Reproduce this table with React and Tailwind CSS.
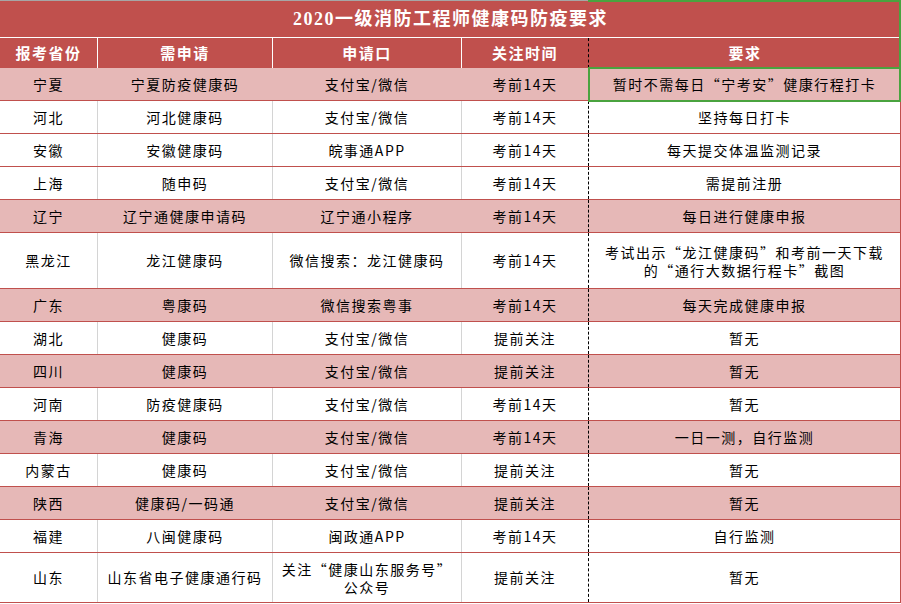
import React from 'react';

const rows = [
  { p: '宁夏', a: '宁夏防疫健康码', b: '支付宝/微信', t: '考前14天', r: '暂时不需每日“宁考安”健康行程打卡', pink: true },
  { p: '河北', a: '河北健康码', b: '支付宝/微信', t: '考前14天', r: '坚持每日打卡' },
  { p: '安徽', a: '安徽健康码', b: '皖事通APP', t: '考前14天', r: '每天提交体温监测记录' },
  { p: '上海', a: '随申码', b: '支付宝/微信', t: '考前14天', r: '需提前注册' },
  { p: '辽宁', a: '辽宁通健康申请码', b: '辽宁通小程序', t: '考前14天', r: '每日进行健康申报', pink: true },
  { p: '黑龙江', a: '龙江健康码', b: '微信搜索：龙江健康码', t: '考前14天', r: ['考试出示“龙江健康码”和考前一天下载', '的“通行大数据行程卡”截图'], h: 'h-[56px]' },
  { p: '广东', a: '粤康码', b: '微信搜索粤事', t: '考前14天', r: '每天完成健康申报', pink: true },
  { p: '湖北', a: '健康码', b: '支付宝/微信', t: '提前关注', r: '暂无' },
  { p: '四川', a: '健康码', b: '支付宝/微信', t: '提前关注', r: '暂无', pink: true },
  { p: '河南', a: '防疫健康码', b: '支付宝/微信', t: '考前14天', r: '暂无' },
  { p: '青海', a: '健康码', b: '支付宝/微信', t: '考前14天', r: '一日一测，自行监测', pink: true },
  { p: '内蒙古', a: '健康码', b: '支付宝/微信', t: '提前关注', r: '暂无' },
  { p: '陕西', a: '健康码/一码通', b: '支付宝/微信', t: '提前关注', r: '暂无', pink: true },
  { p: '福建', a: '八闽健康码', b: '闽政通APP', t: '考前14天', r: '自行监测' },
  { p: '山东', a: '山东省电子健康通行码', b: ['关注“健康山东服务号”', '公众号'], t: '提前关注', r: '暂无', h: 'h-[50px]' },
];

const Lines = ({ v }) => Array.isArray(v)
  ? <span className="block leading-[18px]">{v[0]}<br />{v[1]}</span>
  : v;

export default function App() {
  return (
    <div className="relative w-[901px] h-[604px] bg-white overflow-hidden font-['Noto_Sans_CJK_SC',sans-serif] text-[14px] tracking-[1.5px] text-black">
      {/* title */}
      <div className="h-[37px] bg-[#c0504d] border-t border-[#a6a6a6] flex items-center justify-center text-white font-bold text-[18px] tracking-[1.5px] font-['Liberation_Serif','Noto_Sans_CJK_SC',serif]">
        2020一级消防工程师健康码防疫要求
      </div>

      {/* header */}
      <div className="h-[31px] flex bg-[#c0504d] border-t border-white text-white font-bold text-[15px]">
        <div className="w-[98px] border-r border-white flex items-center justify-center">报考省份</div>
        <div className="w-[175px] border-r border-white flex items-center justify-center">需申请</div>
        <div className="w-[189px] border-r border-white flex items-center justify-center">申请口</div>
        <div className="w-[127px] border-r border-dashed border-black flex items-center justify-center">关注时间</div>
        <div className="w-[312px] flex items-center justify-center">要求</div>
      </div>

      {rows.map((row) => {
        const vline = row.pink ? 'border-[#e6b8b7]' : 'border-[#d4d4d4]';
        return (
          <div key={row.p} className={`flex border-b border-[#c0504d] ${row.h || 'h-[33px]'} ${row.pink ? 'bg-[#e6b8b7]' : 'bg-white'}`}>
            <div className={`w-[98px] border-r ${vline} flex items-center justify-center text-center`}>{row.p}</div>
            <div className={`w-[175px] border-r ${vline} flex items-center justify-center text-center`}>{row.a}</div>
            <div className={`w-[189px] border-r ${vline} flex items-center justify-center text-center`}><Lines v={row.b} /></div>
            <div className="w-[127px] border-r border-dashed border-black flex items-center justify-center text-center">{row.t}</div>
            <div className="w-[312px] border-r border-[#c0504d] flex items-center justify-center text-center"><Lines v={row.r} /></div>
          </div>
        );
      })}

      {/* selection marks */}
      <div className="absolute left-[588px] top-0 w-[313px] h-[2px] bg-[#4aa33f]" />
      <div className="absolute left-[899px] top-0 w-[2px] h-[68px] bg-[#4aa33f]" />
      <div className="absolute left-[588px] top-[67px] w-[313px] h-[35px] border-2 border-[#4aa33f]" />
    </div>
  );
}
